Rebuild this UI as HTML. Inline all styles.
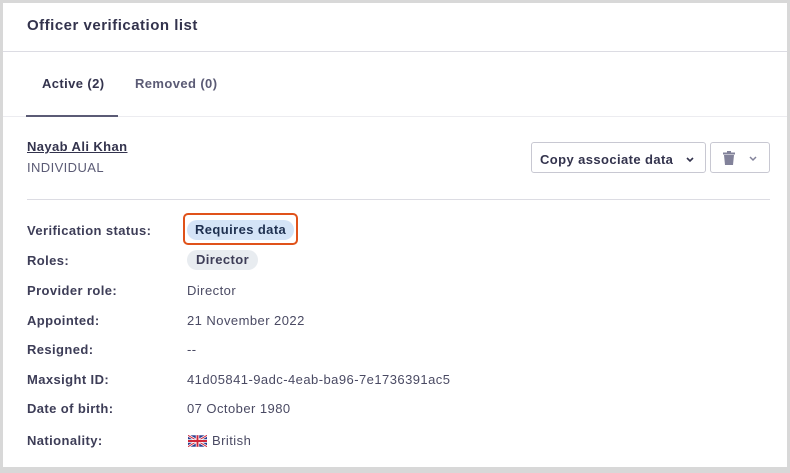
<!DOCTYPE html>
<html><head><style>
*{margin:0;padding:0;box-sizing:border-box}
body{width:790px;height:473px;background:#d8d8d8;font-family:"Liberation Sans",Arial,sans-serif;color:#3d3d57;overflow:hidden;position:relative;letter-spacing:0.4px}
.card{position:absolute;left:3px;top:3px;width:784px;height:464px;background:#fff}
.t{position:absolute;left:24px;top:14px;font-size:15px;font-weight:bold;color:#33334d;letter-spacing:0.5px}
.hr{position:absolute;left:0;right:0;height:1px;background:#dcdce3}
.tab{position:absolute;top:73px;font-size:13px;font-weight:bold}
.lbl{position:absolute;left:24px;font-size:13px;font-weight:bold;color:#3d3d57}
.val{position:absolute;left:184px;font-size:13px;color:#4a4a63;letter-spacing:0.45px}
.btn{position:absolute;top:139px;height:31px;border:1px solid #c8c8d2;border-radius:3px;font-size:13px;font-weight:bold;color:#33334d}
.pill{position:absolute;left:184px;height:20px;border-radius:10px;font-size:13px;font-weight:bold;padding:0 9px;line-height:20px}
</style></head><body>
<div class="card">
<div class="t">Officer verification list</div>
<div class="hr" style="top:48px"></div>
<div class="tab" style="left:39px;color:#33334d">Active (2)</div>
<div class="hr" style="top:113px;background:#ececf0"></div>
<div style="position:absolute;left:23px;top:112px;width:92px;height:2px;background:#5b5b75"></div>
<div class="tab" style="left:132px;color:#5b5b75">Removed (0)</div>
<div style="position:absolute;left:24px;top:136px;font-size:13px;font-weight:bold;text-decoration:underline;color:#33334d">Nayab Ali Khan</div>
<div style="position:absolute;left:24px;top:157px;font-size:13px;color:#5b5b75">INDIVIDUAL</div>
<div class="btn" style="left:528px;width:175px;padding:9px 0 0 8px">Copy associate data <svg width="10" height="8" style="margin-left:8px" viewBox="0 0 10 8"><path d="M2 2l3 3 3-3" stroke="#33334d" stroke-width="1.6" fill="none"/></svg></div>
<div class="btn" style="left:707px;width:60px">
<svg width="12" height="14" style="position:absolute;left:12px;top:8px" viewBox="0 0 12 14"><rect x="0" y="1.5" width="12" height="2" fill="#82829a"/><rect x="4" y="0" width="4" height="2" fill="#82829a"/><path d="M1 4h10l-1 10H2z" fill="#82829a"/></svg>
<svg width="10" height="8" style="position:absolute;left:37px;top:12px" viewBox="0 0 10 8"><path d="M2 2l3 3 3-3" stroke="#82829a" stroke-width="1.5" fill="none"/></svg></div>
<div class="hr" style="top:196px;left:24px;right:17px"></div>
<div class="lbl" style="top:220px">Verification status:</div>
<div style="position:absolute;left:180px;top:210px;width:115px;height:32px;border:2.5px solid #e0521a;border-radius:5px"></div>
<div class="pill" style="top:217px;left:184px;background:#d4e4f7;color:#1e3050;padding:0 8px">Requires data</div>
<div class="lbl" style="top:250px">Roles:</div>
<div class="pill" style="top:247px;background:#e8ecf0;color:#3d3d57">Director</div>
<div class="lbl" style="top:280px">Provider role:</div><div class="val" style="top:280px">Director</div>
<div class="lbl" style="top:310px">Appointed:</div><div class="val" style="top:310px">21 November 2022</div>
<div class="lbl" style="top:339px">Resigned:</div><div class="val" style="top:339px">--</div>
<div class="lbl" style="top:369px">Maxsight ID:</div><div class="val" style="top:369px">41d05841-9adc-4eab-ba96-7e1736391ac5</div>
<div class="lbl" style="top:398px">Date of birth:</div><div class="val" style="top:398px">07 October 1980</div>
<div class="lbl" style="top:430px">Nationality:</div>
<svg style="position:absolute;left:185px;top:432px" width="19" height="12" viewBox="0 0 60 36"><rect width="60" height="36" fill="#2a3d8f"/><path d="M0 0L60 36M60 0L0 36" stroke="#fff" stroke-width="8"/><path d="M0 0L60 36M60 0L0 36" stroke="#d0263a" stroke-width="3"/><path d="M30 0v36M0 18h60" stroke="#fff" stroke-width="11"/><path d="M30 0v36M0 18h60" stroke="#d0263a" stroke-width="6"/></svg>
<div class="val" style="top:430px;left:209px">British</div>
</div>
</body></html>
